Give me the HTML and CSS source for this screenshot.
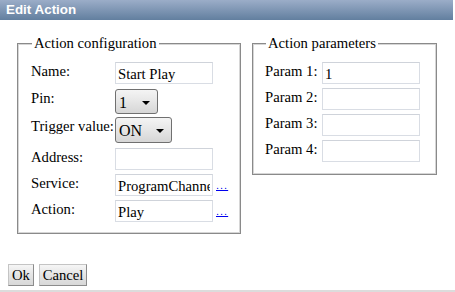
FILE: index.html
```html
<!DOCTYPE html>
<html>
<head>
<meta charset="utf-8">
<title>Edit Action</title>
<link rel="stylesheet" href="styles.css">
</head>
<body>
<div class="dialog">
  <div class="titlebar">Edit Action</div>
  <div class="panels">
    <fieldset class="box box-config">
      <legend>Action configuration</legend>
      <div class="form form-config">
        <div class="lbl">Name:</div>
        <div class="cell"><input class="txt" type="text" value="Start Play"></div>
        <div class="lbl">Pin:</div>
        <div class="cell"><div class="select sel-pin"><span>1</span><svg class="arrow" width="8" height="4" viewBox="0 0 8 4"><path d="M0 0H8L4 4Z" fill="#000"/></svg></div></div>
        <div class="lbl">Trigger value:</div>
        <div class="cell"><div class="select sel-trig"><span>ON</span><svg class="arrow" width="8" height="4" viewBox="0 0 8 4"><path d="M0 0H8L4 4Z" fill="#000"/></svg></div></div>
        <div class="lbl">Address:</div>
        <div class="cell"><input class="txt" type="text" value=""></div>
        <div class="lbl">Service:</div>
        <div class="cell"><input class="txt" type="text" value="ProgramChannel"><a class="more" href="#">...</a></div>
        <div class="lbl">Action:</div>
        <div class="cell"><input class="txt" type="text" value="Play"><a class="more" href="#">...</a></div>
      </div>
    </fieldset>
    <fieldset class="box box-params">
      <legend>Action parameters</legend>
      <div class="form form-params">
        <div class="lbl">Param 1:</div>
        <div class="cell"><input class="txt" type="text" value="1"></div>
        <div class="lbl">Param 2:</div>
        <div class="cell"><input class="txt" type="text" value=""></div>
        <div class="lbl">Param 3:</div>
        <div class="cell"><input class="txt" type="text" value=""></div>
        <div class="lbl">Param 4:</div>
        <div class="cell"><input class="txt" type="text" value=""></div>
      </div>
    </fieldset>
  </div>
  <div class="buttons">
    <button class="btn btn-ok" type="button">Ok</button>
    <button class="btn btn-cancel" type="button">Cancel</button>
  </div>
</div>
</body>
</html>
```
FILE: styles.css
```css
html, body {
  margin: 0;
  padding: 0;
  background: #fff;
}
body {
  font-family: "Liberation Serif", "Times New Roman", serif;
  font-size: 14.67px;
  color: #000;
}
.dialog {
  width: 455px;
  height: 292px;
  box-sizing: border-box;
  border-bottom: 2px solid #dcdcdc;
  display: flex;
  flex-direction: column;
}
.titlebar {
  width: 453px;
  height: 20px;
  box-sizing: border-box;
  padding-left: 6px;
  background: linear-gradient(#9badc8, #627f9f);
  color: #fff;
  font-family: "Liberation Sans", Arial, sans-serif;
  font-weight: bold;
  font-size: 13.4px;
  line-height: 20px;
}
.panels {
  display: flex;
  align-items: flex-start;
  gap: 11px;
  padding: 14px 0 0 17px;
}
.box {
  margin: 0;
  border: 1px solid #8a8a8a;
  box-shadow: inset 0 0 0 1px #d6d6d6;
  min-width: 0;
}
.box legend {
  font-size: 14.67px;
  line-height: 18px;
  padding: 0 2px;
  background: #fff;
}
.box-config {
  width: 224px;
  box-sizing: border-box;
  padding: 10px 0 11px 13px;
}
.box-config legend {
  margin-left: 1px;
}
.box-params {
  width: 185px;
  box-sizing: border-box;
  padding: 10px 0 12px 12px;
}
.box-params legend {
  margin-left: 1px;
}
.form {
  display: grid;
}
.form-config {
  grid-template-columns: 84px auto;
  grid-template-rows: 27px 28px 31px 26px 26px 22px;
}
.form-params {
  grid-template-columns: 57px auto;
  grid-template-rows: 26px 26px 26px 22px;
}
.lbl {
  line-height: 18px;
  padding-top: 0;
  white-space: nowrap;
}
.cell {
  display: flex;
  align-items: flex-end;
  align-self: start;
}
.txt {
  width: 98px;
  height: 22px;
  box-sizing: border-box;
  margin: 0;
  padding: 2px 2px 0;
  border: 1px solid #d9dde4;
  border-top-color: #cfd3da;
  font-family: "Liberation Serif", "Times New Roman", serif;
  font-size: 14.67px;
  color: #000;
  background: #fff;
  outline: none;
}
.more {
  margin-left: 3px;
  margin-bottom: 6px;
  font-family: "Liberation Sans", Arial, sans-serif;
  font-size: 11px;
  line-height: 10px;
  letter-spacing: 1px;
  color: #0000ee;
  text-decoration: underline;
}
.select {
  height: 25px;
  box-sizing: border-box;
  display: flex;
  align-items: center;
  justify-content: space-between;
  padding: 2px 7px 0 3px;
  border: 1px solid #707070;
  border-radius: 3px;
  background: linear-gradient(#f4f4f4, #e6e6e6 50%, #d6d6d6);
  font-size: 16px;
}
.sel-pin {
  width: 43px;
}
.sel-trig {
  width: 57px;
  height: 26px;
}
.arrow {
  display: block;
}
.buttons {
  display: flex;
  gap: 5px;
  padding: 30px 0 0 8px;
}
.btn {
  height: 22px;
  margin: 0;
  padding: 0;
  border: 1px solid #a0a0a0;
  border-color: #c4c4c4 #8c8c8c #8c8c8c #c4c4c4;
  background: linear-gradient(#f6f6f6, #e4e4e4 50%, #d8d8d8);
  font-family: "Liberation Serif", "Times New Roman", serif;
  font-size: 14.67px;
  line-height: 18px;
  color: #000;
}
.btn-ok {
  width: 26px;
}
.btn-cancel {
  width: 48px;
}
```
